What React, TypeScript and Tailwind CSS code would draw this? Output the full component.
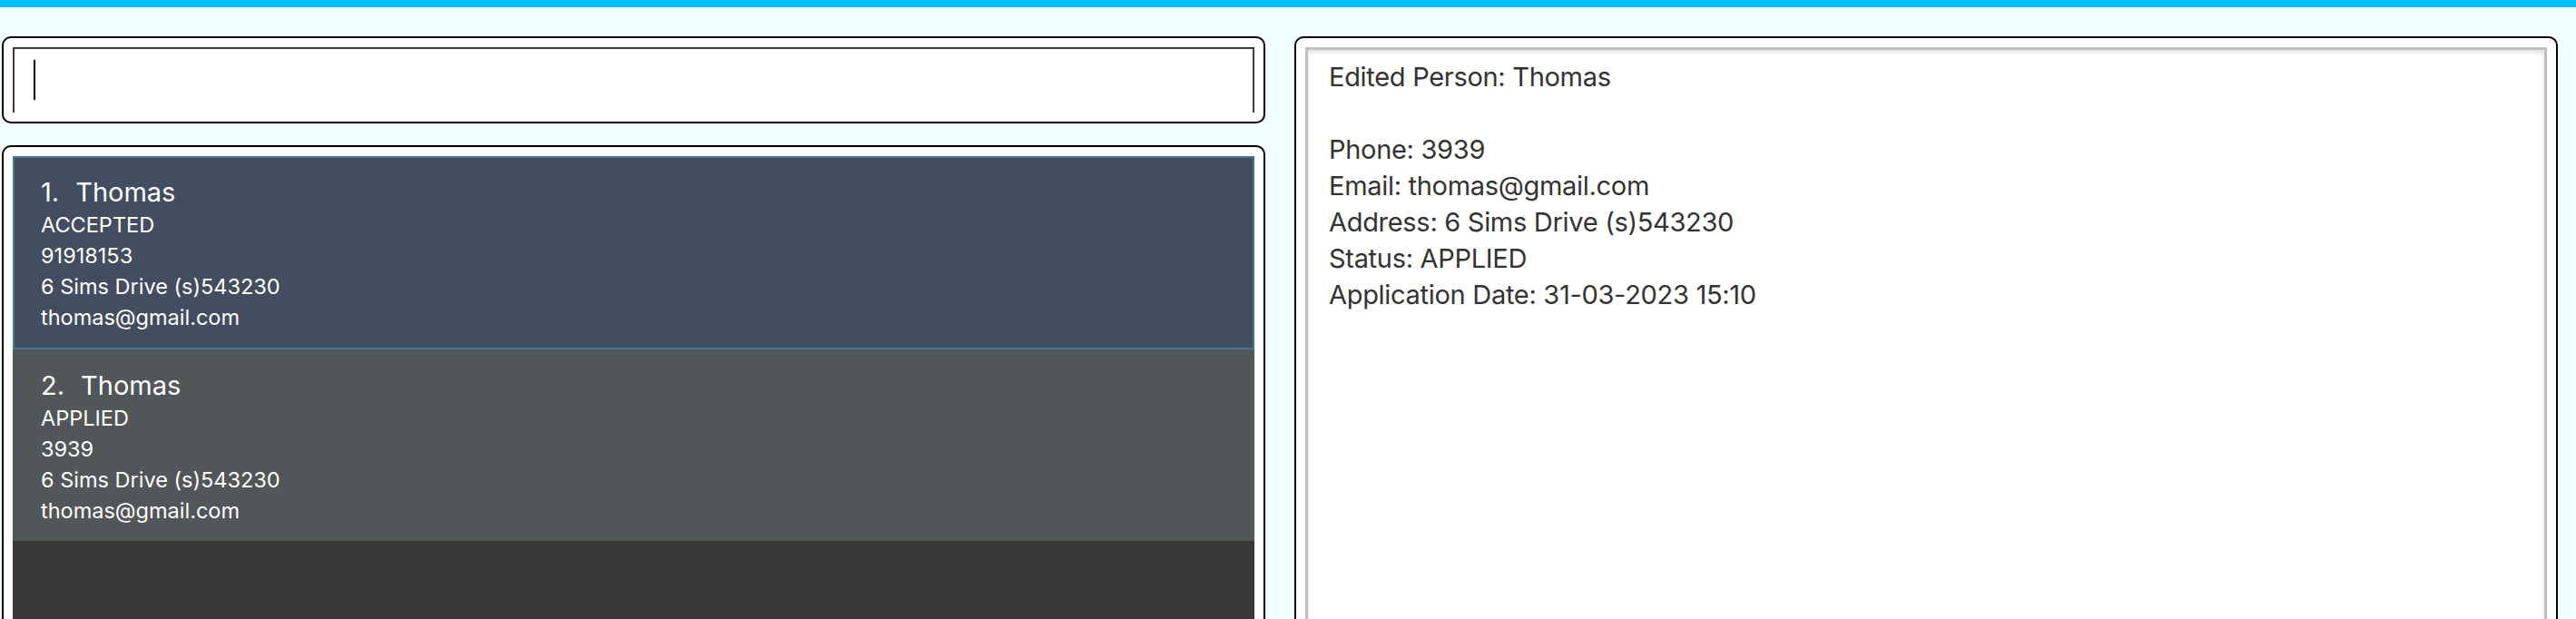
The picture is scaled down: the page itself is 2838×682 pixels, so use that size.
import React from 'react';

const persons = [
  { idx: 1, name: 'Thomas', status: 'ACCEPTED', phone: '91918153', address: '6 Sims Drive (s)543230', email: 'thomas@gmail.com', selected: true },
  { idx: 2, name: 'Thomas', status: 'APPLIED', phone: '3939', address: '6 Sims Drive (s)543230', email: 'thomas@gmail.com', selected: false },
];

const resultLines = [
  'Edited Person: Thomas',
  '',
  'Phone: 3939',
  'Email: thomas@gmail.com',
  'Address: 6 Sims Drive (s)543230',
  'Status: APPLIED',
  'Application Date: 31-03-2023 15:10',
];

function PersonCard({ p }: { p: (typeof persons)[number] }) {
  return (
    <div
      className={
        p.selected
          ? 'h-[213px] shrink-0 border-2 border-[#3e7b91] bg-[#424d5f] pl-[29px] pt-[19px] text-white'
          : 'h-[211px] shrink-0 bg-[#515658] pl-[31px] pt-[21px] text-white'
      }
    >
      <div className="flex text-[29px] leading-[37px]">
        <span>{p.idx}.</span>
        <span className="ml-[18px]">{p.name}</span>
      </div>
      <div className="mt-[1px] text-[23.5px] leading-[34px]">
        <div>{p.status}</div>
        <div>{p.phone}</div>
        <div>{p.address}</div>
        <div>{p.email}</div>
      </div>
    </div>
  );
}

export default function App() {
  return (
    <div className="flex h-[682px] w-full flex-col overflow-hidden bg-[#f0ffff] font-['Inter',sans-serif]">
      <div className="h-[8px] shrink-0 bg-[#00bfff]" />

      <div className="flex gap-[32px] pl-[2px] pt-[32px]">
        {/* left column: command box + person list */}
        <div className="flex w-[1392px] shrink-0 flex-col gap-[24px]">
          <div className="rounded-[10px] border-2 border-black bg-white p-[10px]">
            <div className="h-[72px] border-x-2 border-t-2 border-[#3c3c3c] pl-[21px] pt-[12px]">
              <div className="h-[44px] w-[2px] bg-black" />
            </div>
          </div>

          <div className="h-[600px] rounded-[10px] border-2 border-black bg-white p-[10px]">
            <div className="flex h-full flex-col bg-[#383838]">
              {persons.map((p) => (
                <PersonCard key={p.idx} p={p} />
              ))}
            </div>
          </div>
        </div>

        {/* right column: result display */}
        <div className="h-[700px] w-[1392px] shrink-0 rounded-[10px] border-2 border-black bg-white p-[10px]">
          <div className="h-full border-[3px] border-[#c0c0c0] bg-white pl-[23px] pt-[10px] text-[29px] leading-[40px] tracking-[-0.3px] text-[#333333] shadow-[inset_0_3px_4px_rgba(0,0,0,0.12)]">
            {resultLines.map((line, i) => (
              <div key={i} className="h-[40px]">
                {line}
              </div>
            ))}
          </div>
        </div>
      </div>
    </div>
  );
}
